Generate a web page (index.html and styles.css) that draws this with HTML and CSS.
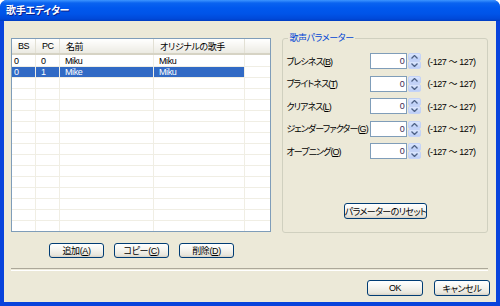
FILE: index.html
```html
<!DOCTYPE html>
<html lang="ja">
<head>
    <meta charset="UTF-8">
    <title>歌手エディター</title>
    <link rel="stylesheet" href="styles.css">
</head>
<body>
    <div class="window">
        <div class="titlebar">歌手エディター</div>
        <div class="client">
            <div class="main">
                <div class="listbox">
                    <table class="list">
                        <thead>
                            <tr><th class="c-bs">BS</th><th class="c-pc">PC</th><th class="c-name">名前</th><th class="c-orig">オリジナルの歌手</th><th class="c-pad"></th></tr>
                        </thead>
                        <tbody>
                            <tr><td>0</td><td>0</td><td>Miku</td><td>Miku</td><td></td></tr>
                            <tr class="sel"><td>0</td><td>1</td><td>Mike</td><td>Miku</td><td></td></tr>
                            <tr><td></td><td></td><td></td><td></td><td></td></tr>
                            <tr><td></td><td></td><td></td><td></td><td></td></tr>
                            <tr><td></td><td></td><td></td><td></td><td></td></tr>
                            <tr><td></td><td></td><td></td><td></td><td></td></tr>
                            <tr><td></td><td></td><td></td><td></td><td></td></tr>
                            <tr><td></td><td></td><td></td><td></td><td></td></tr>
                            <tr><td></td><td></td><td></td><td></td><td></td></tr>
                            <tr><td></td><td></td><td></td><td></td><td></td></tr>
                            <tr><td></td><td></td><td></td><td></td><td></td></tr>
                            <tr><td></td><td></td><td></td><td></td><td></td></tr>
                            <tr><td></td><td></td><td></td><td></td><td></td></tr>
                            <tr><td></td><td></td><td></td><td></td><td></td></tr>
                            <tr><td></td><td></td><td></td><td></td><td></td></tr>
                            <tr><td></td><td></td><td></td><td></td><td></td></tr>
                        </tbody>
                    </table>
                </div>

                <fieldset class="params">
                    <legend>歌声パラメーター</legend>
                    <div class="param">
                        <span class="plabel">ブレシネス(<u>B</u>)</span>
                        <span class="num">0</span>
                        <span class="spin"><span class="up"><svg width="7" height="4" viewBox="0 0 7 4"><path d="M0.5 3.5 L3.5 0.5 L6.5 3.5" fill="none" stroke="#4d6185" stroke-width="1.3"/></svg></span><span class="down"><svg width="7" height="4" viewBox="0 0 7 4"><path d="M0.5 0.5 L3.5 3.5 L6.5 0.5" fill="none" stroke="#4d6185" stroke-width="1.3"/></svg></span></span>
                        <span class="range">(-127 〜 127)</span>
                    </div>
                    <div class="param">
                        <span class="plabel">ブライトネス(<u>T</u>)</span>
                        <span class="num">0</span>
                        <span class="spin"><span class="up"><svg width="7" height="4" viewBox="0 0 7 4"><path d="M0.5 3.5 L3.5 0.5 L6.5 3.5" fill="none" stroke="#4d6185" stroke-width="1.3"/></svg></span><span class="down"><svg width="7" height="4" viewBox="0 0 7 4"><path d="M0.5 0.5 L3.5 3.5 L6.5 0.5" fill="none" stroke="#4d6185" stroke-width="1.3"/></svg></span></span>
                        <span class="range">(-127 〜 127)</span>
                    </div>
                    <div class="param">
                        <span class="plabel">クリアネス(<u>L</u>)</span>
                        <span class="num">0</span>
                        <span class="spin"><span class="up"><svg width="7" height="4" viewBox="0 0 7 4"><path d="M0.5 3.5 L3.5 0.5 L6.5 3.5" fill="none" stroke="#4d6185" stroke-width="1.3"/></svg></span><span class="down"><svg width="7" height="4" viewBox="0 0 7 4"><path d="M0.5 0.5 L3.5 3.5 L6.5 0.5" fill="none" stroke="#4d6185" stroke-width="1.3"/></svg></span></span>
                        <span class="range">(-127 〜 127)</span>
                    </div>
                    <div class="param">
                        <span class="plabel">ジェンダーファクター(<u>G</u>)</span>
                        <span class="num">0</span>
                        <span class="spin"><span class="up"><svg width="7" height="4" viewBox="0 0 7 4"><path d="M0.5 3.5 L3.5 0.5 L6.5 3.5" fill="none" stroke="#4d6185" stroke-width="1.3"/></svg></span><span class="down"><svg width="7" height="4" viewBox="0 0 7 4"><path d="M0.5 0.5 L3.5 3.5 L6.5 0.5" fill="none" stroke="#4d6185" stroke-width="1.3"/></svg></span></span>
                        <span class="range">(-127 〜 127)</span>
                    </div>
                    <div class="param">
                        <span class="plabel">オープニング(<u>O</u>)</span>
                        <span class="num">0</span>
                        <span class="spin"><span class="up"><svg width="7" height="4" viewBox="0 0 7 4"><path d="M0.5 3.5 L3.5 0.5 L6.5 3.5" fill="none" stroke="#4d6185" stroke-width="1.3"/></svg></span><span class="down"><svg width="7" height="4" viewBox="0 0 7 4"><path d="M0.5 0.5 L3.5 3.5 L6.5 0.5" fill="none" stroke="#4d6185" stroke-width="1.3"/></svg></span></span>
                        <span class="range">(-127 〜 127)</span>
                    </div>
                    <div class="reset-row">
                        <button class="xpbtn reset" type="button">パラメーターのリセット</button>
                    </div>
                </fieldset>
            </div>

            <div class="list-buttons">
                <button class="xpbtn small" type="button">追加(<u>A</u>)</button>
                <button class="xpbtn small" type="button">コピー(<u>C</u>)</button>
                <button class="xpbtn small" type="button">削除(<u>D</u>)</button>
            </div>

            <div class="separator"></div>

            <div class="dialog-buttons">
                <button class="xpbtn dlg" type="button">OK</button>
                <button class="xpbtn dlg" type="button">キャンセル</button>
            </div>
        </div>
    </div>
</body>
</html>
```

FILE: styles.css
```css
body{
    margin: 0;
    background: #ffffff;
    font-family: "Liberation Sans", "Noto Sans CJK JP", sans-serif;
    font-size: 9px;
    letter-spacing: -0.4px;
    font-feature-settings: "palt";
    color: #000;
}
.window{
    width: 500px;
    height: 306px;
    display: flex;
    flex-direction: column;
    background: #0843dc;
    border-radius: 7px 7px 0 0;
    overflow: hidden;
}
.titlebar{
    height: 21px;
    flex: none;
    padding-left: 6px;
    line-height: 22px;
    color: #fff;
    font-weight: bold;
    font-size: 10px;
    letter-spacing: -0.3px;
    text-shadow: 1px 1px 0 #0a1e8c;
    background: linear-gradient(#3d95ff 0, #0a63f0 3px, #0058ee 8px, #0054e8 14px, #0048d8 19px, #003cc0 21px);
}
.client{
    flex: 1;
    margin: 0 4px 4px 4px;
    background: #ece9d8;
    padding: 17px 8px 0 7px;
    display: flex;
    flex-direction: column;
}
.main{
    display: flex;
    align-items: flex-start;
    gap: 11px;
}

/* list view */
.listbox{
    width: 259px;
    height: 192px;
    border: 1px solid #7f9db9;
    background: #fff;
    overflow: hidden;
}
.list{
    border-collapse: collapse;
    table-layout: fixed;
    width: 259px;
}
.list th{
    height: 14px;
    padding: 0 0 0 6px;
    text-align: left;
    font-weight: normal;
    background: linear-gradient(#ffffff, #f4f3ee 60%, #ebeae2);
    border-bottom: 2px solid #d6d3c4;
    border-right: 1px solid #e2e0d4;
    white-space: nowrap;
    overflow: hidden;
}
.list .c-bs{ width: 17px; padding-left: 6px; }
.list .c-pc{ width: 17px; }
.list .c-name{ width: 87px; }
.list .c-orig{ width: 84px; }
.list td{
    height: 10px;
    line-height: 10px;
    padding: 0 0 0 5px;
    border-right: 1px solid #f0eee4;
    border-bottom: 1px solid #f0eee4;
    white-space: nowrap;
    overflow: hidden;
}
.list td:first-child{ padding-left: 2px; }
.list td:last-child{ border-right: none; }
.list tbody tr:first-child td{ padding-top: 1px; }
.list tr.sel td{
    background: #316ac5;
    color: #fff;
}
.list tr.sel td:last-child{ background: #fff; }

/* parameter group */
.params{
    margin: -6px 0 0 0;
    padding: 9px 0 13px 3px;
    width: 201px;
    height: 177px;
    border: 1px solid #d0d0bf;
    border-radius: 3px;
    display: flex;
    flex-direction: column;
    gap: 6.5px;
}
.params legend{
    color: #0046d5;
    padding: 0 1px;
    margin-left: 2px;
    line-height: 12px;
}
.param{
    display: flex;
    align-items: center;
    height: 16px;
}
.plabel{
    width: 84px;
    flex: none;
    letter-spacing: -0.9px;
    white-space: nowrap;
}
.plabel u, .xpbtn u{ text-decoration: underline; }
.num{
    width: 33px;
    height: 14px;
    border: 1px solid #7f9db9;
    background: #fff;
    text-align: right;
    padding-right: 2px;
    line-height: 14px;
    color: #3c2850;
}
.spin{
    width: 13px;
    height: 16px;
    margin-left: 1px;
    display: flex;
    flex-direction: column;
}
.spin span{
    flex: 1;
    display: flex;
    align-items: center;
    justify-content: center;
    background: linear-gradient(#dbe6fd, #bccef7);
    border: 1px solid #c4d3f7;
    border-radius: 2px;
}
.range{
    margin-left: 6px;
    white-space: nowrap;
}
.reset-row{
    margin-top: auto;
    display: flex;
    justify-content: center;
    padding-right: 3px;
}

/* xp buttons */
.xpbtn{
    font-family: inherit;
    font-size: 9px;
    letter-spacing: -0.4px;
    font-feature-settings: "palt";
    color: #000;
    padding: 0;
    border: 1px solid #003c74;
    border-radius: 3px;
    background: linear-gradient(#ffffff, #f5f4ef 45%, #e8e6dc 85%, #d6d0c5);
    white-space: nowrap;
}
.reset{
    width: 83px;
    height: 16px;
    letter-spacing: -0.6px;
}
.list-buttons{
    width: 261px;
    margin-top: 10px;
    display: flex;
    justify-content: center;
    gap: 10px;
}
.small{
    width: 55px;
    height: 15px;
}
.separator{
    margin-top: 10px;
    height: 1px;
    border-top: 1px solid #aca899;
    border-bottom: 1px solid #ffffff;
}
.dialog-buttons{
    margin-top: 9px;
    margin-right: -2px;
    display: flex;
    justify-content: flex-end;
    gap: 11px;
}
.dlg{
    width: 56px;
    height: 16px;
}
```
